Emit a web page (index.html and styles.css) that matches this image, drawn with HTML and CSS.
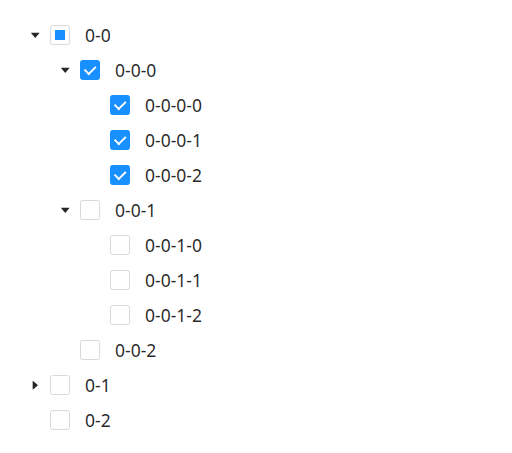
FILE: index.html
```html
<!DOCTYPE html>
<html>
<head>
<meta charset="utf-8">
<link rel="stylesheet" href="styles.css">
</head>
<body>
<div class="tree">
  <div class="node">
    <span class="switcher open"><svg viewBox="0 0 1024 1024"><path d="M840.4 300H183.6c-19.7 0-30.7 20.8-18.5 35l328.4 380.8c9.4 10.9 27.5 10.9 37 0L858.9 335c12.2-14.2 1.2-35-18.5-35z"/></svg></span>
    <span class="checkbox indeterminate"></span>
    <span class="title">0-0</span>
  </div>
  <div class="node">
    <span class="indent"></span>
    <span class="switcher open"><svg viewBox="0 0 1024 1024"><path d="M840.4 300H183.6c-19.7 0-30.7 20.8-18.5 35l328.4 380.8c9.4 10.9 27.5 10.9 37 0L858.9 335c12.2-14.2 1.2-35-18.5-35z"/></svg></span>
    <span class="checkbox checked"></span>
    <span class="title">0-0-0</span>
  </div>
  <div class="node">
    <span class="indent"></span><span class="indent"></span>
    <span class="switcher"></span>
    <span class="checkbox checked"></span>
    <span class="title">0-0-0-0</span>
  </div>
  <div class="node">
    <span class="indent"></span><span class="indent"></span>
    <span class="switcher"></span>
    <span class="checkbox checked"></span>
    <span class="title">0-0-0-1</span>
  </div>
  <div class="node">
    <span class="indent"></span><span class="indent"></span>
    <span class="switcher"></span>
    <span class="checkbox checked"></span>
    <span class="title">0-0-0-2</span>
  </div>
  <div class="node">
    <span class="indent"></span>
    <span class="switcher open"><svg viewBox="0 0 1024 1024"><path d="M840.4 300H183.6c-19.7 0-30.7 20.8-18.5 35l328.4 380.8c9.4 10.9 27.5 10.9 37 0L858.9 335c12.2-14.2 1.2-35-18.5-35z"/></svg></span>
    <span class="checkbox"></span>
    <span class="title">0-0-1</span>
  </div>
  <div class="node">
    <span class="indent"></span><span class="indent"></span>
    <span class="switcher"></span>
    <span class="checkbox"></span>
    <span class="title">0-0-1-0</span>
  </div>
  <div class="node">
    <span class="indent"></span><span class="indent"></span>
    <span class="switcher"></span>
    <span class="checkbox"></span>
    <span class="title">0-0-1-1</span>
  </div>
  <div class="node">
    <span class="indent"></span><span class="indent"></span>
    <span class="switcher"></span>
    <span class="checkbox"></span>
    <span class="title">0-0-1-2</span>
  </div>
  <div class="node">
    <span class="indent"></span>
    <span class="switcher"></span>
    <span class="checkbox"></span>
    <span class="title">0-0-2</span>
  </div>
  <div class="node">
    <span class="switcher closed"><svg viewBox="0 0 1024 1024"><path d="M840.4 300H183.6c-19.7 0-30.7 20.8-18.5 35l328.4 380.8c9.4 10.9 27.5 10.9 37 0L858.9 335c12.2-14.2 1.2-35-18.5-35z"/></svg></span>
    <span class="checkbox"></span>
    <span class="title">0-1</span>
  </div>
  <div class="node">
    <span class="switcher"></span>
    <span class="checkbox"></span>
    <span class="title">0-2</span>
  </div>
</div>
</body>
</html>
```

FILE: styles.css
```css
html, body {
  margin: 0;
  padding: 0;
  background: #fff;
}
body {
  padding: 20px;
  font-family: "Noto Sans", "Open Sans", sans-serif;
  font-size: 17.5px;
  color: rgba(0, 0, 0, 0.85);
}
.tree {
  display: flex;
  flex-direction: column;
}
.node {
  display: flex;
  align-items: flex-start;
  padding-bottom: 5px;
}
.indent {
  width: 30px;
  height: 30px;
  flex: none;
}
.switcher {
  width: 30px;
  height: 30px;
  flex: none;
  display: flex;
  align-items: center;
  justify-content: center;
}
.switcher svg {
  width: 12.5px;
  height: 12.5px;
  fill: rgba(0, 0, 0, 0.85);
}
.switcher.closed svg {
  transform: rotate(-90deg);
}
.checkbox {
  box-sizing: border-box;
  width: 20px;
  height: 20px;
  margin: 5px 10px 0 0;
  border: 1px solid #d9d9d9;
  border-radius: 2.5px;
  background: #fff;
  flex: none;
  position: relative;
}
.checkbox.checked {
  background: #1890ff;
  border-color: #1890ff;
}
.checkbox.checked::after {
  content: "";
  position: absolute;
  box-sizing: border-box;
  top: 50%;
  left: 21.5%;
  width: 7.14px;
  height: 11.43px;
  border: 2.5px solid #fff;
  border-top: 0;
  border-left: 0;
  transform: rotate(45deg) scale(1) translate(-50%, -50%);
}
.checkbox.indeterminate::after {
  content: "";
  position: absolute;
  top: 50%;
  left: 50%;
  width: 10px;
  height: 10px;
  background: #1890ff;
  transform: translate(-50%, -50%);
}
.title {
  padding: 0 5px;
  line-height: 30px;
  height: 30px;
  white-space: nowrap;
}
```
